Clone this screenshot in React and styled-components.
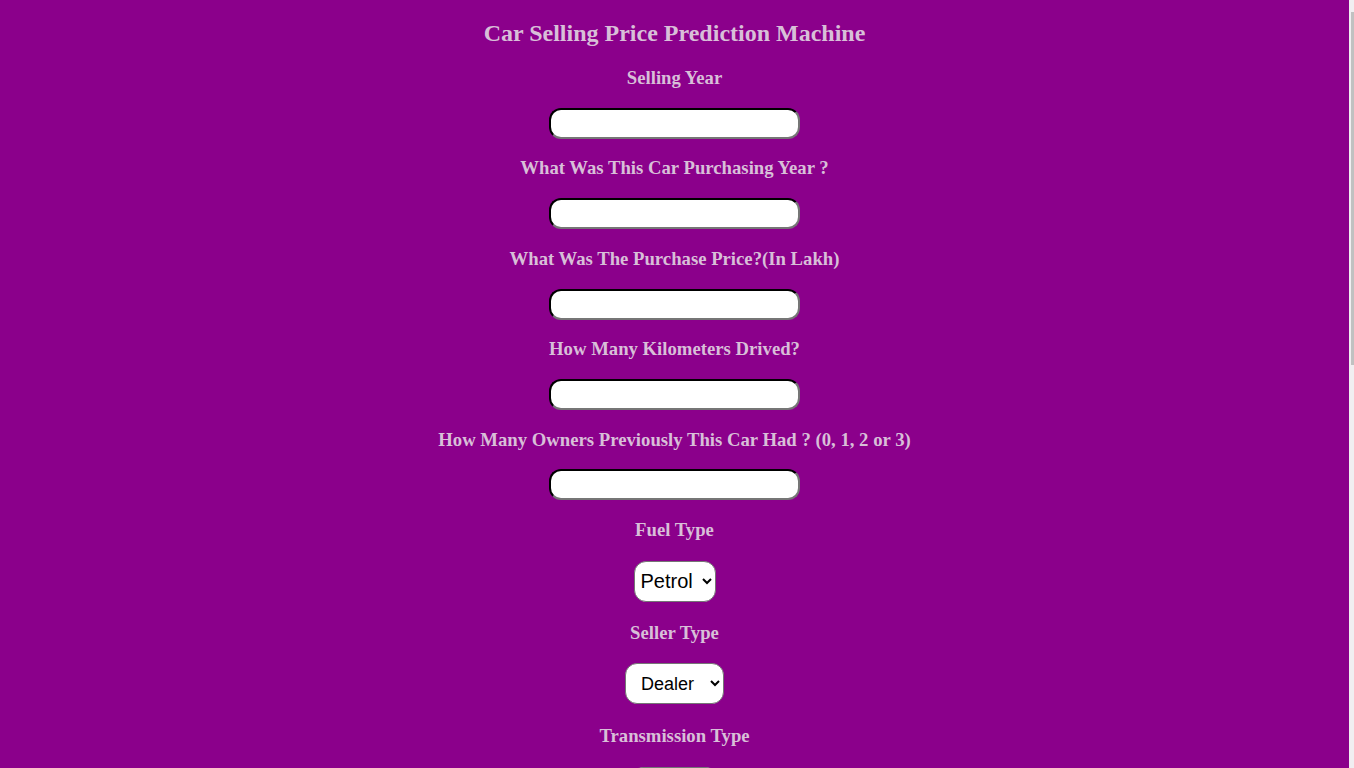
import React, { useState } from "react";
import styled, { createGlobalStyle } from "styled-components";

const GlobalStyle = createGlobalStyle`
  html {
    background: #8b008b;
  }
  body {
    margin: 0;
    padding-right: 5px;
    background: #8b008b;
    font-family: "Liberation Serif", "Times New Roman", serif;
  }
`;

const Page = styled.div`
  text-align: center;
  color: #d8bfd8;
  padding-top: 1px;
  padding-bottom: 420px;
`;

// thin scrollbar strip seen on the right edge of the window
const ScrollTrack = styled.div`
  position: fixed;
  top: 0;
  right: 0;
  width: 5px;
  height: 100vh;
  background: #f1eef1;
`;

const ScrollThumb = styled.div`
  position: absolute;
  top: 12px;
  right: 0;
  width: 3px;
  height: 353px;
  background: #c1c1c1;
`;

const Title = styled.h2`
  font-size: 24px;
  font-weight: bold;
  margin: 19px 0 20px;
`;

const Label = styled.h3`
  font-size: 18.72px;
  font-weight: bold;
  margin: 18.72px 0;
`;

const Field = styled.input`
  box-sizing: border-box;
  width: 251px;
  height: 31px;
  border-radius: 12px;
  border: 2px inset #767676;
  border-top-color: #1f1f1f;
  border-left-color: #1f1f1f;
  background: #fff;
  padding: 1px 8px;
  font-family: "Liberation Sans", Arial, sans-serif;
  font-size: 15px;
  vertical-align: top;
`;

const SelectRow = styled.div`
  height: ${(p) => p.$h}px;
`;

const Select = styled.select`
  box-sizing: border-box;
  height: 41px;
  margin-top: 1px;
  width: ${(p) => p.$w}px;
  border-radius: 12px;
  border: 1px solid #767676;
  background: #fff;
  color: #000;
  padding: 0 0 0 ${(p) => p.$pl}px;
  font-family: "Liberation Sans", Arial, sans-serif;
  font-size: ${(p) => p.$fs}px;
  vertical-align: top;
`;

const Button = styled.button`
  margin-top: 30px;
  padding: 10px 28px;
  border-radius: 12px;
  border: 1px solid #767676;
  background: #fff;
  font-family: "Liberation Sans", Arial, sans-serif;
  font-size: 20px;
`;

const questions = [
  "Selling Year",
  "What Was This Car Purchasing Year ?",
  "What Was The Purchase Price?(In Lakh)",
  "How Many Kilometers Drived?",
  "How Many Owners Previously This Car Had ? (0, 1, 2 or 3)",
];

export default function App() {
  const [values, setValues] = useState(questions.map(() => ""));

  const handleChange = (i, v) => {
    const next = [...values];
    next[i] = v;
    setValues(next);
  };

  return (
    <Page>
      <GlobalStyle />
      <Title>Car Selling Price Prediction Machine</Title>
      <form onSubmit={(e) => e.preventDefault()}>
        {questions.map((q, i) => (
          <div key={q}>
            <Label>{q}</Label>
            <Field value={values[i]} onChange={(e) => handleChange(i, e.target.value)} />
          </div>
        ))}
        <Label>Fuel Type</Label>
        <SelectRow $h={43}>
          <Select $w={82} $pl={2} $fs={20}>
            <option>Petrol</option>
            <option>Diesel</option>
            <option>CNG</option>
          </Select>
        </SelectRow>
        <Label>Seller Type</Label>
        <SelectRow $h={44}>
          <Select $w={99} $pl={11} $fs={18}>
            <option>Dealer</option>
            <option>Individual</option>
          </Select>
        </SelectRow>
        <Label>Transmission Type</Label>
        <SelectRow $h={43}>
          <Select $w={87} $pl={2} $fs={18}>
            <option>Manual</option>
            <option>Automatic</option>
          </Select>
        </SelectRow>
        <div>
          <Button type="submit">Predict</Button>
        </div>
      </form>
      <ScrollTrack>
        <ScrollThumb />
      </ScrollTrack>
    </Page>
  );
}
